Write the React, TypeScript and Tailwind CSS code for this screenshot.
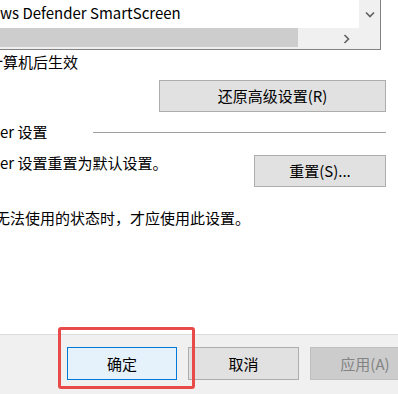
import React from "react";

const font = { fontFamily: '"Noto Sans CJK SC", "Noto Sans", sans-serif' };

function Btn({ children, className = "" }: { children: React.ReactNode; className?: string }) {
  return (
    <div
      className={
        "flex items-center justify-center border border-[#adadad] bg-[#e1e1e1] text-[15px] text-black " +
        className
      }
    >
      {children}
    </div>
  );
}

export default function App() {
  return (
    <div
      className="relative h-[394px] w-[398px] overflow-hidden bg-white text-[15px] leading-[20px] text-black"
      style={font}
    >
      {/* list box */}
      <div className="flex h-[50px] w-[381px] flex-col border-b border-r border-[#828282]">
        <div className="flex h-[28px]">
          <div className="flex-1 whitespace-nowrap pt-[3px]">ws Defender SmartScreen</div>
          <div className="flex w-[21px] items-center justify-center bg-[#f0f0f0]">
            <svg width="10" height="7" viewBox="0 0 10 7">
              <path d="M1 1.5 L5 5.5 L9 1.5" fill="none" stroke="#606060" strokeWidth="1.6" />
            </svg>
          </div>
        </div>
        <div className="flex h-[21px] bg-[#f0f0f0]">
          <div className="h-[19px] w-[298px] bg-[#cdcdcd]" />
          <div className="flex flex-1 items-center justify-end pr-[30px]">
            <svg width="7" height="10" viewBox="0 0 7 10">
              <path d="M1.5 1 L5.5 5 L1.5 9" fill="none" stroke="#606060" strokeWidth="1.6" />
            </svg>
          </div>
        </div>
      </div>

      <div className="ml-[-12px] mt-[2px] whitespace-nowrap">计算机后生效</div>

      <Btn className="ml-[159px] mt-[8px] h-[32px] w-[227px]">还原高级设置(R)</Btn>

      <div className="mt-[10px] flex h-[20px] w-[386px] items-center">
        <span className="whitespace-nowrap">er 设置</span>
        <div className="ml-auto h-px w-[293px] bg-[#a0a0a0]" />
      </div>

      <div className="mt-[11px] flex w-[386px] items-start justify-between">
        <span className="whitespace-nowrap">er 设置重置为默认设置。</span>
        <Btn className="mt-[2px] h-[32px] w-[132px]">重置(S)...</Btn>
      </div>

      <div className="ml-[-5px] mt-[21px] whitespace-nowrap">无法使用的状态时，才应使用此设置。</div>

      {/* bottom bar */}
      <div className="absolute bottom-0 left-0 right-0 flex h-[60px] items-start gap-[11px] border-t border-[#dcdcdc] bg-[#f0f0f0] pl-[67px] pt-[12px]">
        <div className="flex h-[33px] w-[110px] shrink-0 items-center justify-center border border-[#0078d7] bg-[#e5f1fb]">
          确定
        </div>
        <Btn className="h-[33px] w-[111px] shrink-0">取消</Btn>
        <div className="flex h-[33px] w-[110px] shrink-0 items-center justify-center border border-[#bfbfbf] bg-[#cccccc] text-[#838383]">
          应用(A)
        </div>
      </div>

      {/* red highlight */}
      <div className="absolute left-[58px] top-[327px] h-[62px] w-[137px] rounded-[3px] border-[3px] border-[#e84a4a]" />
    </div>
  );
}
